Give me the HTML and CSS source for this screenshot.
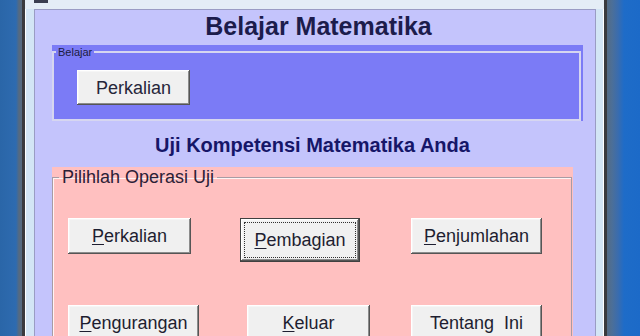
FILE: index.html
```html
<!DOCTYPE html>
<html lang="id">
<head>
<meta charset="utf-8">
<title>Belajar Matematika</title>
<link rel="stylesheet" href="styles.css">
</head>
<body>
<div class="desk">
  <div class="frame">
    <div class="titlebar"><span class="ticon"></span></div>
    <div class="client">
      <h1 class="title">Belajar Matematika</h1>
      <div class="panel panel-blue">
        <fieldset class="group group-blue">
          <legend>Belajar</legend>
          <button class="btn btn-learn">Perkalian</button>
        </fieldset>
      </div>
      <h2 class="subtitle">Uji Kompetensi Matematika Anda</h2>
      <div class="panel panel-pink">
        <fieldset class="group group-pink">
          <legend>Pilihlah Operasi Uji</legend>
          <div class="row row1">
            <button class="btn b-kali"><span class="acc">P</span>erkalian</button>
            <button class="btn btn-focus b-bagi"><span class="acc">P</span>embagian</button>
            <button class="btn b-jumlah"><span class="acc">P</span>enjumlahan</button>
          </div>
          <div class="row row2">
            <button class="btn b-kurang"><span class="acc">P</span>engurangan</button>
            <button class="btn b-keluar"><span class="acc">K</span>eluar</button>
            <button class="btn b-tentang">Tentang&nbsp; Ini</button>
          </div>
        </fieldset>
      </div>
    </div>
  </div>
</div>
</body>
</html>
```

FILE: styles.css
```css
html, body {
  margin: 0;
  padding: 0;
}
body {
  width: 640px;
  height: 336px;
  overflow: hidden;
  font-family: "Liberation Sans", Arial, sans-serif;
}
.desk {
  display: flex;
  width: 640px;
  height: 336px;
  box-sizing: border-box;
  padding: 0 33px 0 22px;
  overflow: hidden;
  background: linear-gradient(90deg,
    #2a66a8 0px, #2e6bb0 16px, #566a80 19px, #566a80 22px,
    #566a80 606px, #4c6f98 612px, #3a6cae 618px, #1e6cc8 624px, #1c6ac8 640px);
}
.frame {
  flex: 1;
  display: flex;
  flex-direction: column;
  min-height: 0;
  overflow: hidden;
  border-left: 3px solid #3a3a3e;
  border-right: 3px solid #3a3a3e;
  background: #d3e5f5;
  box-shadow: inset 1px 0 0 #ffffff, inset -1px 0 0 #ffffff;
  padding: 0 8px 0 9px;
}
.titlebar {
  flex-shrink: 0;
  height: 9px;
  background: #e4edf6;
  margin: 0 -8px 0 -9px;
  padding-left: 9px;
}
.ticon {
  display: block;
  width: 14px;
  height: 3px;
  background: #3a3e50;
}
.client {
  flex: 1 0 auto;
  background: #c4c4fc;
  border: 1px solid #9a9cc4;
  border-bottom: 0;
}
.title {
  margin: 0;
  padding: 1px 0 0 7px;
  font: bold 25px/30px "Liberation Sans", Arial, sans-serif;
  color: #1c1c4c;
  text-align: center;
}
.subtitle {
  margin: 12px 0 0 0;
  padding-right: 5px;
  font: bold 20px/24px "Liberation Sans", Arial, sans-serif;
  color: #161668;
  text-align: center;
}
.panel-blue {
  margin: 4px 12px 0 17px;
  padding: 1px 2px 0 0;
  background: #7b7bf6;
}
.panel-pink {
  margin: 10px 22px 0 17px;
  padding: 0 1px 0 0;
  background: #ffc0c0;
  height: 200px;
}
.group {
  margin: 0;
  min-width: 0;
}
.group-blue {
  border: 2px solid #d6d6f0;
  padding: 12px 0 14px 0;
}
.group-blue legend {
  font: 11px/12px "Liberation Sans", Arial, sans-serif;
  color: #1c1c40;
  padding: 0 2px;
  margin-left: 2px;
}
.group-pink {
  border: 1px solid #a89ca4;
  box-shadow: inset 1px 1px 0 #fff4f4;
  padding: 31px 0 0 0;
  height: 200px;
}
.group-pink legend {
  font: 18px/20px "Liberation Sans", Arial, sans-serif;
  color: #2c2036;
  padding: 0 3px;
  margin-left: 6px;
}
.row {
  display: flex;
  align-items: flex-start;
}
.row2 {
  margin-top: 43px;
}
.btn {
  box-sizing: border-box;
  height: 36px;
  padding: 0;
  margin: 0;
  border: 0;
  background: #f0f0f0;
  color: #1e1e30;
  font: 18px/20px "Liberation Sans", Arial, sans-serif;
  box-shadow:
    inset -1px -1px 0 #555555,
    inset 1px 1px 0 #ffffff,
    inset -2px -2px 0 #8c8c8c,
    inset 2px 2px 0 #f6f6f6;
}
.acc {
  text-decoration: underline;
  text-underline-offset: 2px;
}
.btn-learn {
  width: 113px;
  height: 35px;
  margin-left: 23px;
  color: #26263a;
}
.btn-focus {
  border: 1px solid #404040;
  outline: 1px dotted #303030;
  outline-offset: -5px;
}
.b-kali { width: 123px; margin-left: 15px; }
.b-bagi { width: 120px; height: 44px; margin-left: 49px; }
.b-jumlah { width: 131px; margin-left: 51px; }
.b-kurang { width: 131px; margin-left: 15px; }
.b-keluar { width: 123px; margin-left: 48px; }
.b-tentang { width: 131px; margin-left: 41px; }
```
